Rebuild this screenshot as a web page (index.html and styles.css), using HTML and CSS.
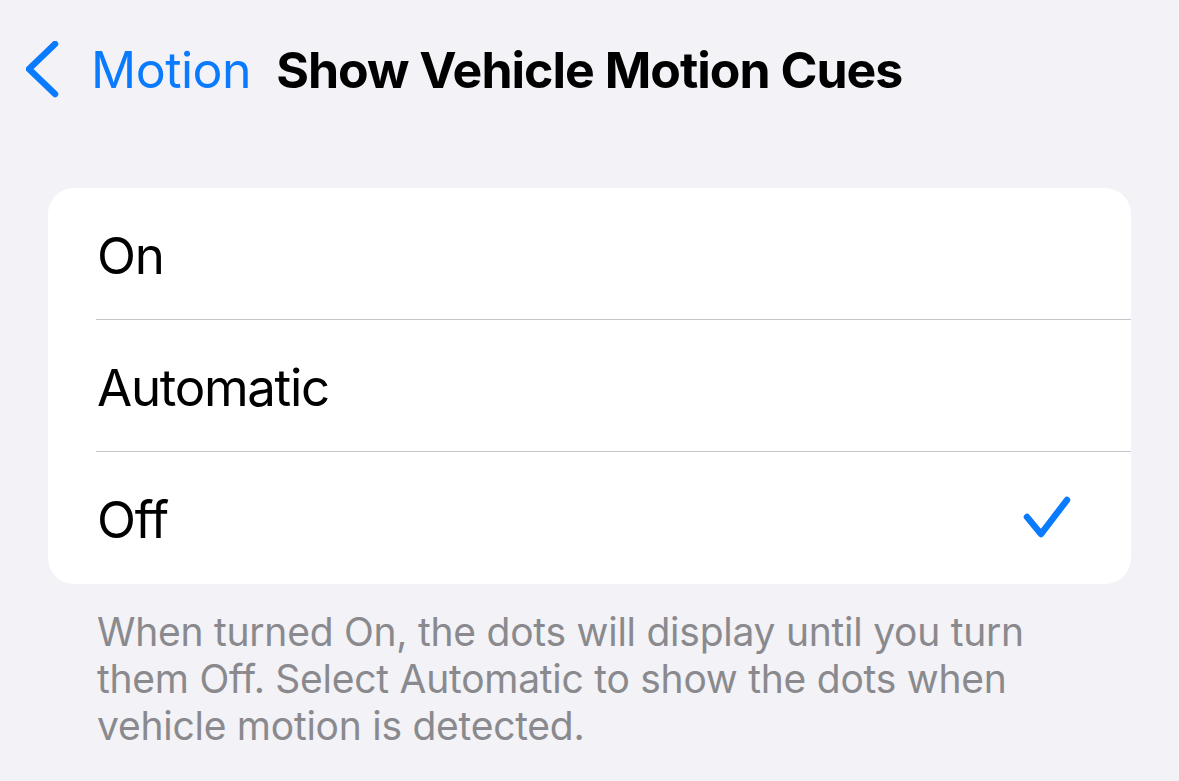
FILE: index.html
```html
<!DOCTYPE html>
<html lang="en">

<head>
    <meta charset="UTF-8">
    <meta name="viewport" content="width=device-width, initial-scale=1.0">
    <title>Show Vehicle Motion Cues</title>
    <link rel="stylesheet" href="styles.css">
</head>

<body>

    <!-- 顶部导航栏 -->
    <div class="nav-bar">
        <a class="back-btn" href="#">
            <svg class="chevron" width="40" height="60" viewBox="0 0 40 60">
                <path d="M29 3 L3 28 L29 53" fill="none" stroke="#0a7aff" stroke-width="6.5"
                    stroke-linecap="round" stroke-linejoin="round" />
            </svg>
            <span>Motion</span>
        </a>
        <h1 class="nav-title">Show Vehicle Motion Cues</h1>
    </div>

    <!-- 选项列表 -->
    <div class="option-list">
        <div class="option-row">
            <div class="option-inner">
                <span class="option-label">On</span>
            </div>
        </div>
        <div class="option-row">
            <div class="option-inner">
                <span class="option-label">Automatic</span>
            </div>
        </div>
        <div class="option-row selected">
            <div class="option-inner">
                <span class="option-label">Off</span>
                <svg class="check" width="50" height="46" viewBox="0 0 50 46">
                    <path d="M4 22 L18 39 L44 5" fill="none" stroke="#0a7aff" stroke-width="6.5"
                        stroke-linecap="round" stroke-linejoin="round" />
                </svg>
            </div>
        </div>
    </div>

    <p class="footer-note">When turned On, the dots will display until you turn them Off. Select Automatic to show the
        dots when vehicle motion is detected.</p>

</body>

</html>
```

FILE: styles.css
```css
body {
    font-family: Inter, "Noto Sans", sans-serif;
    margin: 0;
    background-color: #f2f2f7;
    color: #000;
}

.nav-bar {
    display: flex;
    align-items: center;
    height: 110px;
    padding: 30px 0 0 26px;
    box-sizing: border-box;
}

.back-btn {
    display: flex;
    align-items: center;
    color: #0a7aff;
    text-decoration: none;
    font-size: 50px;
    letter-spacing: -0.5px;
}

.back-btn .chevron {
    margin-right: 25px;
    margin-top: 2px;
}

.nav-title {
    margin: 0 0 0 25px;
    font-size: 50px;
    font-weight: 700;
    letter-spacing: -1px;
}

.option-list {
    margin: 78px 48px 0 48px;
    background-color: white;
    border-radius: 26px;
    overflow: hidden;
}

.option-row {
    padding-left: 48px;
}

.option-inner {
    display: flex;
    align-items: center;
    justify-content: space-between;
    height: 131px;
    padding-right: 58px;
    border-bottom: 1px solid #c6c6c8;
}

.option-row:last-child .option-inner {
    border-bottom: none;
    height: 132px;
}

.option-label {
    font-size: 51px;
    padding: 3px 0 0 1px;
    letter-spacing: -1.3px;
}

.footer-note {
    margin: 24px 90px 0 97px;
    font-size: 39px;
    line-height: 47px;
    letter-spacing: -0.25px;
    color: #8a8a8e;
}
```
